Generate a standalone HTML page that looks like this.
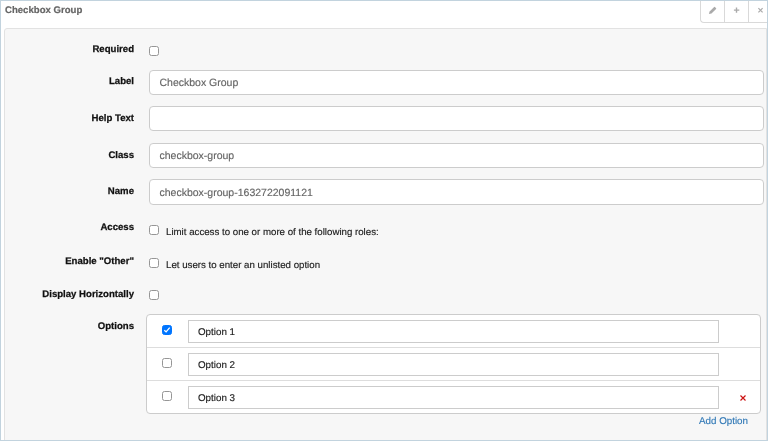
<!DOCTYPE html>
<html><head><meta charset="utf-8">
<style>
html,body{margin:0;padding:0;width:768px;height:441px;overflow:hidden;background:#fff;}
body{position:relative;font-family:"Liberation Sans",sans-serif;}
.frame{position:absolute;left:0;top:0;width:766px;height:439px;border:1px solid #c2d3de;}
.title{position:absolute;left:5px;top:5px;font-size:9.6px;font-weight:bold;color:#666;-webkit-text-stroke:0.2px #666;white-space:nowrap;}
.actions{position:absolute;left:700px;top:0;width:68px;height:23px;border:1px solid #d9d9d9;border-top:none;border-right:none;border-bottom-left-radius:4px;box-sizing:border-box;}
.actions .div{position:absolute;top:0;width:1px;height:22px;background:#d9d9d9;}
.panel{position:absolute;left:4px;top:28px;width:763px;height:420px;box-sizing:border-box;background:#f7f7f7;border:1px solid #e2e2e2;border-radius:3px 0 0 3px;}
.lbl{position:absolute;right:634px;font-size:9.6px;font-weight:bold;color:#111;-webkit-text-stroke:0.25px #111;white-space:nowrap;}
.inp{position:absolute;left:149px;width:615px;height:25px;box-sizing:border-box;background:#fff;border:1px solid #ccc;border-radius:4px;}
.inp span{position:absolute;left:9.5px;top:6.3px;font-size:10.5px;color:#666;-webkit-text-stroke:0.15px #666;white-space:nowrap;}
.cb{position:absolute;width:10px;height:10px;box-sizing:border-box;border:1px solid #969696;border-radius:2.5px;background:#fff;}
.txt{position:absolute;font-size:9.7px;color:#222;-webkit-text-stroke:0.15px #222;white-space:nowrap;}
.opts{position:absolute;left:146px;top:314px;width:615px;height:100px;box-sizing:border-box;background:#fff;border:1px solid #ccc;border-radius:4px;}
.opts .row{position:absolute;left:0;width:613px;height:1px;background:#ddd;}
.oin{position:absolute;left:188px;width:531px;height:23px;box-sizing:border-box;background:#fff;border:1px solid #ccc;}
.oin span{position:absolute;left:9px;top:5.8px;font-size:9.8px;color:#222;-webkit-text-stroke:0.15px #222;white-space:nowrap;}
.add{position:absolute;left:699px;top:415.6px;font-size:9.8px;color:#337ab7;-webkit-text-stroke:0.15px #337ab7;white-space:nowrap;}
</style></head><body>
<div id="w" style="position:absolute;left:0;top:0;width:768px;height:441px;will-change:transform;text-rendering:geometricPrecision">
<div class="title">Checkbox Group</div>
<div class="actions">
  <div class="div" style="left:23px"></div>
  <div class="div" style="left:47px"></div>
</div>
<svg style="position:absolute;left:700px;top:0" width="68" height="22" viewBox="700 0 68 22">
  <path d="M708.9 14.1L709.6 11.5L714.1 7.0Q714.5 6.7 714.9 7.0L716.1 8.2Q716.4 8.6 716.1 9.0L711.5 13.4Z" fill="#aaa"/>
  <path d="M736.5 7.4V12.8M733.9 10.1H739.3" stroke="#aaa" stroke-width="1.4"/>
  <path d="M758.4 8.1L762.6 12.3M762.6 8.1L758.4 12.3" stroke="#aaa" stroke-width="1.2"/>
</svg>
<div class="panel"></div>

<div class="lbl" style="top:43.8px">Required</div>
<div class="cb" style="left:149px;top:45.5px"></div>

<div class="lbl" style="top:75.8px">Label</div>
<div class="inp" style="top:69.75px"><span>Checkbox Group</span></div>

<div class="lbl" style="top:112.8px">Help Text</div>
<div class="inp" style="top:106.25px"></div>

<div class="lbl" style="top:149.8px">Class</div>
<div class="inp" style="top:143.25px"><span style="top:5.6px">checkbox-group</span></div>

<div class="lbl" style="top:185.8px">Name</div>
<div class="inp" style="top:179.25px;height:25.6px"><span>checkbox-group-1632722091121</span></div>

<div class="lbl" style="top:222.3px">Access</div>
<div class="cb" style="left:149px;top:225px"></div>
<div class="txt" style="left:166px;top:226.8px">Limit access to one or more of the following roles:</div>

<div class="lbl" style="top:255.8px">Enable "Other"</div>
<div class="cb" style="left:149px;top:258px"></div>
<div class="txt" style="left:166px;top:259.8px">Let users to enter an unlisted option</div>

<div class="lbl" style="top:288.8px">Display Horizontally</div>
<div class="cb" style="left:149px;top:290px"></div>

<div class="lbl" style="top:320.8px">Options</div>
<div class="opts">
  <div class="row" style="top:32px"></div>
  <div class="row" style="top:65px"></div>
</div>
<div class="cb" style="left:162px;top:325px;background:#0075ff;border-color:#0075ff"><svg style="position:absolute;left:0;top:0" width="8" height="8" viewBox="0 0 8 8"><path d="M1.3 4.2L3.1 5.9L6.7 1.6" stroke="#fff" stroke-width="1.3" fill="none"/></svg></div>
<div class="oin" style="top:320px"><span>Option 1</span></div>
<div class="cb" style="left:162px;top:358px"></div>
<div class="oin" style="top:353px"><span>Option 2</span></div>
<div class="cb" style="left:162px;top:391px"></div>
<div class="oin" style="top:386px"><span>Option 3</span></div>
<svg style="position:absolute;left:739px;top:394px" width="8" height="8" viewBox="0 0 8 8"><path d="M1.5 1.5L6.5 6.5M6.5 1.5L1.5 6.5" stroke="#cc1111" stroke-width="1.15"/></svg>
<div class="add">Add Option</div>
<div class="frame"></div>
</div>
</body></html>
